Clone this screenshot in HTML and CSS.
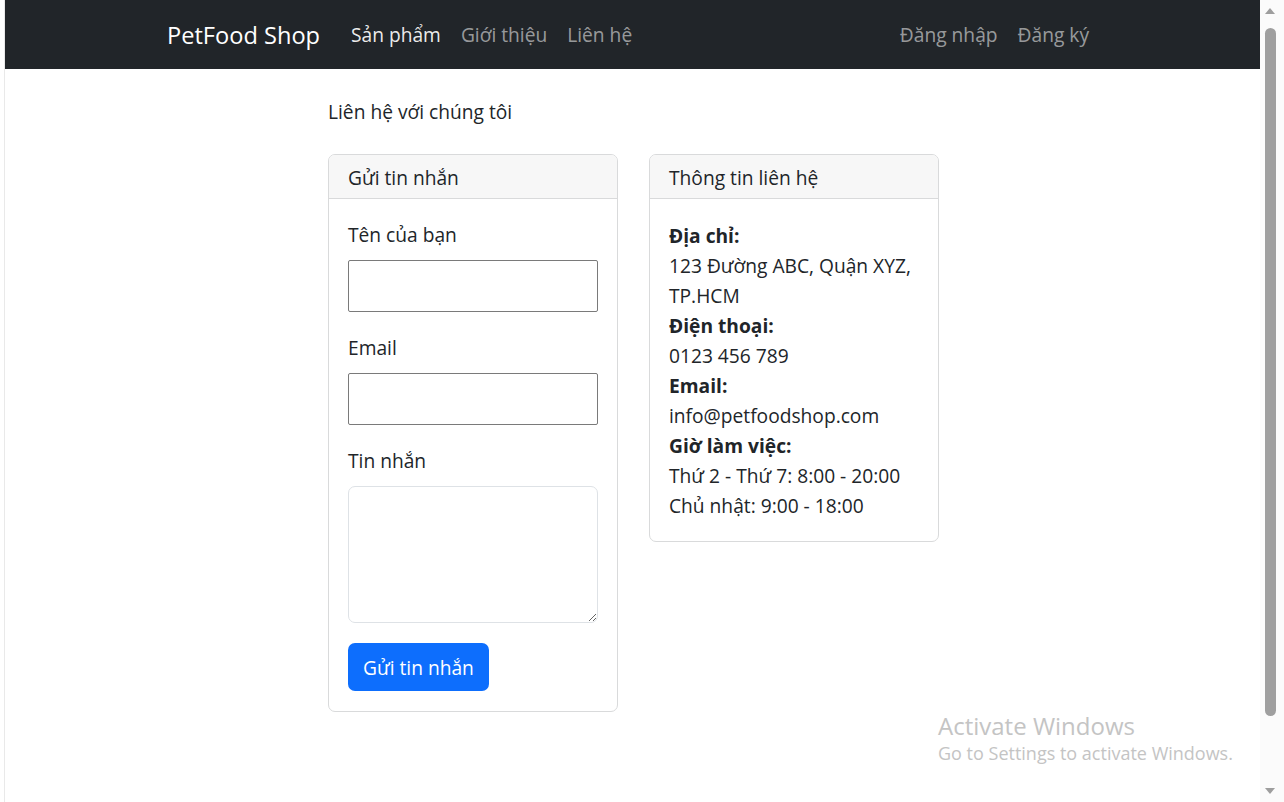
FILE: index.html
```html
<!DOCTYPE html>
<html lang="vi">
<head>
<meta charset="utf-8">
<title>Liên hệ - PetFood Shop</title>
<link rel="stylesheet" href="styles.css">
</head>
<body>
<div class="window">
  <div class="viewport">
    <nav class="navbar">
      <a class="brand" href="#">PetFood Shop</a>
      <ul class="nav">
        <li><a class="nav-link active" href="#">Sản phẩm</a></li>
        <li><a class="nav-link" href="#">Giới thiệu</a></li>
        <li><a class="nav-link" href="#">Liên hệ</a></li>
      </ul>
      <ul class="nav nav-right">
        <li><a class="nav-link" href="#">Đăng nhập</a></li>
        <li><a class="nav-link" href="#">Đăng ký</a></li>
      </ul>
    </nav>
    <main class="main">
      <p class="title">Liên hệ với chúng tôi</p>
      <div class="cols">
        <section class="card">
          <div class="card-header">Gửi tin nhắn</div>
          <form class="card-body">
            <div class="group">
              <label class="label" for="name">Tên của bạn</label>
              <input class="input" id="name" type="text">
            </div>
            <div class="group">
              <label class="label" for="email">Email</label>
              <input class="input" id="email" type="email">
            </div>
            <div class="group">
              <label class="label" for="msg">Tin nhắn</label>
              <textarea class="textarea" id="msg"></textarea>
            </div>
            <button class="btn" type="button">Gửi tin nhắn</button>
          </form>
        </section>
        <section class="card">
          <div class="card-header">Thông tin liên hệ</div>
          <div class="card-body info">
            <p class="line"><strong>Địa chỉ:</strong></p>
            <p class="line">123 Đường ABC, Quận XYZ, TP.HCM</p>
            <p class="line"><strong>Điện thoại:</strong></p>
            <p class="line">0123 456 789</p>
            <p class="line"><strong>Email:</strong></p>
            <p class="line">info@petfoodshop.com</p>
            <p class="line"><strong>Giờ làm việc:</strong></p>
            <p class="line">Thứ 2 - Thứ 7: 8:00 - 20:00</p>
            <p class="line">Chủ nhật: 9:00 - 18:00</p>
          </div>
        </section>
      </div>
    </main>
  </div>
  <div class="scrollbar">
    <span class="arrow arrow-up"></span>
    <span class="thumb"></span>
    <span class="arrow arrow-down"></span>
  </div>
  <div class="watermark">
    <div class="wm-title">Activate Windows</div>
    <div class="wm-sub">Go to Settings to activate Windows.</div>
  </div>
</div>
</body>
</html>
```
FILE: styles.css
```css
* { box-sizing: border-box; }
html, body { margin: 0; padding: 0; background: #fff; }
body {
  font-family: "Open Sans", "Noto Sans", sans-serif;
  font-size: 19.2px;
  line-height: 30px;
  color: #212529;
}
.window {
  position: relative;
  display: flex;
  width: 1284px;
  height: 802px;
  padding-left: 4px;
  overflow: hidden;
}
.viewport {
  width: 1256px;
  height: 802px;
  border-left: 1px solid #e9e9e9;
  display: flex;
  flex-direction: column;
}
.navbar {
  height: 69px;
  flex: none;
  background: #212529;
  display: flex;
  align-items: center;
  padding: 0 161px 0 162px;
}
.brand {
  color: #fff;
  text-decoration: none;
  font-size: 23.6px;
  line-height: 34px;
  margin-right: 21px;
  padding-top: 1px;
}
.nav {
  list-style: none;
  margin: 0;
  padding: 0;
  display: flex;
}
.nav-right { margin-left: auto; }
.nav-link {
  display: block;
  padding: 0 10px;
  color: rgba(255, 255, 255, 0.55);
  text-decoration: none;
}
.nav-link.active { color: rgba(255, 255, 255, 0.93); }
.main {
  padding: 28px 0 0 323px;
}
.title {
  margin: 0 0 27px;
}
.cols {
  display: flex;
  align-items: flex-start;
  gap: 31px;
}
.card {
  width: 290px;
  border: 1px solid #d9dadb;
  border-radius: 7px;
  background: #fff;
  overflow: hidden;
}
.card-header {
  background: #f7f7f7;
  border-bottom: 1px solid #d9dadb;
  padding: 7px 19px 5px;
  line-height: 31px;
}
.card-body {
  padding: 20px 19px;
  margin: 0;
}
.group { margin-bottom: 20px; }
.label {
  display: block;
  margin-bottom: 11px;
  position: relative;
  top: 1px;
}
.input {
  display: block;
  width: 100%;
  height: 52px;
  border: 1px solid #7a7a7a;
  border-radius: 2px;
  background: #fff;
  font: inherit;
  margin: 0;
}
.textarea {
  display: block;
  width: 100%;
  height: 137px;
  border: 1px solid #dee2e6;
  border-radius: 7px;
  background: #fff;
  font: inherit;
  margin: 0;
  resize: vertical;
}
.btn {
  display: inline-block;
  height: 48px;
  padding: 0 15px;
  border: none;
  border-radius: 7px;
  background: #0d6efd;
  color: #fff;
  font: inherit;
  line-height: 50px;
  cursor: pointer;
}
.info { padding-top: 22px; padding-bottom: 20px; }
.line { margin: 0; }
.line strong { font-weight: 700; }
.scrollbar {
  width: 24px;
  height: 802px;
  background: #fbfbfb;
  display: flex;
  flex-direction: column;
  align-items: center;
  padding: 8px 0 8px 0;
}
.arrow {
  width: 0;
  height: 0;
  border-left: 5px solid transparent;
  border-right: 5px solid transparent;
}
.arrow-up {
  border-bottom: 6px solid #9e9e9e;
  margin-left: -4px;
}
.arrow-down {
  border-top: 6px solid #9e9e9e;
  margin-left: -4px;
}
.thumb {
  width: 11px;
  margin: 14px 0 0 -4px;
  height: 688px;
  background: #9f9f9f;
  border-radius: 6px;
  margin-bottom: auto;
}
.watermark {
  position: absolute;
  left: 938px;
  top: 709px;
  color: #c4c4c4;
  pointer-events: none;
}
.wm-title {
  font-size: 24px;
  line-height: 34px;
}
.wm-sub {
  font-size: 18px;
  line-height: 24px;
  margin-top: -2px;
}
```
